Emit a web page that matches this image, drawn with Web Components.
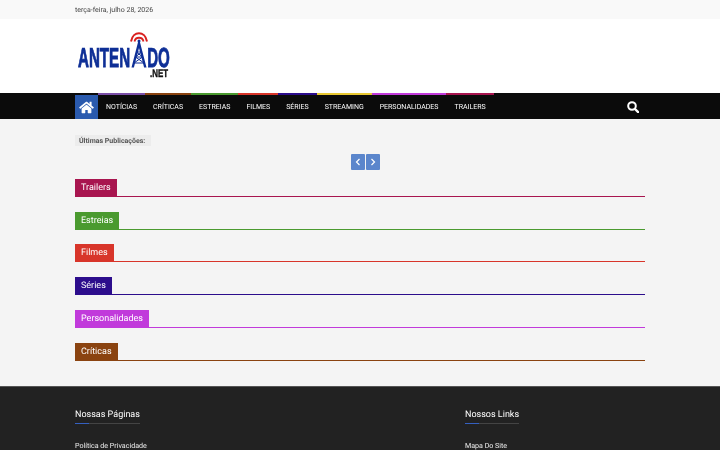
<!DOCTYPE html>
<html lang="pt">
<head>
<meta charset="utf-8">
<title>Antenado</title>
<style>
  html, body { margin: 0; padding: 0; }
  html { background: #f4f4f4; }
  body { font-family: Roboto, "Liberation Sans", sans-serif; text-rendering: geometricPrecision; filter: blur(.3px); }
</style>
</head>
<body>
<site-topbar>terça-feira, julho 28, 2026</site-topbar>
<site-header></site-header>
<main-nav>
  <nav-item color="#7b4fa8">NOTÍCIAS</nav-item>
  <nav-item color="#8a4310">CRÍTICAS</nav-item>
  <nav-item color="#4a9a2f">ESTREIAS</nav-item>
  <nav-item color="#d8352a">FILMES</nav-item>
  <nav-item color="#2c0d8c">SÉRIES</nav-item>
  <nav-item color="#e8c832">STREAMING</nav-item>
  <nav-item color="#c13adb">PERSONALIDADES</nav-item>
  <nav-item color="#a8154f">TRAILERS</nav-item>
</main-nav>
<site-main>
  <latest-ticker>Últimas Publicações:</latest-ticker>
  <section-title color="#a8154f">Trailers</section-title>
  <section-title color="#4a9a2f">Estreias</section-title>
  <section-title color="#d8352a">Filmes</section-title>
  <section-title color="#2c0d8c">Séries</section-title>
  <section-title color="#c13adb">Personalidades</section-title>
  <section-title color="#8a4310">Críticas</section-title>
</site-main>
<site-footer>
  <footer-col heading="Nossas Páginas"><a>Política de Privacidade</a></footer-col>
  <footer-col heading="Nossos Links"><a>Mapa Do Site</a></footer-col>
</site-footer>

<script>
class SiteTopbar extends HTMLElement {
  constructor() {
    super();
    this.attachShadow({ mode: 'open' });
    this.shadowRoot.innerHTML = `
      <style>
        :host { display: block; background: #f9f9f9; height: 19px; padding: 0 75px; font-size: 7px; line-height: 21px; color: #444; }
      </style>
      <slot></slot>`;
  }
}

class SiteHeader extends HTMLElement {
  constructor() {
    super();
    this.attachShadow({ mode: 'open' });
    this.shadowRoot.innerHTML = `
      <style>
        :host { display: flex; align-items: flex-start; background: #fff; height: 74px; padding: 0 75px; }
        .logo { position: relative; width: 92px; height: 47px; margin: 13px 0 0 3px; font-family: "Liberation Sans", sans-serif; font-weight: 700; color: #0e2f96; }
        .word { position: absolute; left: 0; top: 14px; transform: scaleX(.55); transform-origin: 0 0; font-size: 27.5px; line-height: 24px; white-space: nowrap; -webkit-text-stroke: .9px #0e2f96; display: flex; }
        .gap { display: block; width: 31px; }
        .net { position: absolute; left: 72px; top: 38px; transform: scaleX(.72); transform-origin: 0 0; font-size: 11px; line-height: 8px; color: #111; -webkit-text-stroke: .4px #111; }
        svg { position: absolute; left: 52px; top: 0; }
      </style>
      <div class="logo">
        <div class="word"><span>ANTEN</span><span class="gap"></span><span>DO</span></div>
        <span class="net">.NET</span>
        <svg width="18" height="36" viewBox="0 0 18 36" fill="none">
          <path d="M1 9.500C3 -1.500 15 -1.500 17 9.500" stroke="#d9201f" stroke-width="2"/>
          <path d="M4.500 9.500C5.500 4.500 12.500 4.500 13.500 9.500" stroke="#d9201f" stroke-width="1.800"/>
          <circle cx="9" cy="9" r="1.500" fill="#0e2f96"/>
          <path d="M8.200 9.500h1.600L16.500 35.500h-2.400L9 16 3.900 35.500H1.500z" fill="#0e2f96"/>
          <path d="M6.500 20h5M5.500 25h7M4 31h10M6.500 20l6 5M11.500 20l-6 5M5.500 25l8.500 6M12.500 25l-8.500 6" stroke="#0e2f96" stroke-width="1"/>
        </svg>
      </div>`;
  }
}

class MainNav extends HTMLElement {
  constructor() {
    super();
    this.attachShadow({ mode: 'open' });
    this.shadowRoot.innerHTML = `
      <style>
        :host { display: flex; align-items: stretch; background: #0b0b0b; height: 26px; padding: 0 75px; }
        .home { display: flex; align-items: center; justify-content: center; width: 23px; background: #2a5aae; margin-top: 2px; }
        .items { display: flex; flex: 1; }
        .search { display: flex; align-items: center; padding: 2px 6px 0 0; }
      </style>
      <a class="home">
        <svg width="15" height="13" viewBox="0 0 576 512" fill="#fff"><path d="M280 148 96 300v164c0 9 7 16 16 16l112-.3c9 0 16-7 16-16V368c0-9 7-16 16-16h64c9 0 16 7 16 16v96c0 9 7 16 16 16l112 .3c9 0 16-7 16-16V300L296 148c-5-4-11-4-16 0zM572 251l-84-69V44c0-7-5-12-12-12h-56c-7 0-12 5-12 12v72l-89-74c-18-14-43-14-61 0L4 251c-5 4-6 12-2 17l26 31c4 5 12 6 17 2L280 107c5-4 11-4 16 0l235 194c5 4 13 3 17-2l26-31c4-5 3-13-2-17z"/></svg>
      </a>
      <div class="items"><slot></slot></div>
      <div class="search">
        <svg width="12" height="12" viewBox="0 0 12 12" fill="none" stroke="#fff"><circle cx="5" cy="5" r="3.800" stroke-width="2"/><path d="M8 8l3.200 3.200" stroke-width="2.400" stroke-linecap="round"/></svg>
      </div>`;
  }
}

class NavItem extends HTMLElement {
  constructor() {
    super();
    this.attachShadow({ mode: 'open' });
    this.shadowRoot.innerHTML = `
      <style>
        :host { display: block; box-sizing: border-box; height: 26px; padding: 0 8px; border-top: 2px solid var(--c); font-size: 7px; line-height: 25px; color: #fff; white-space: nowrap; }
      </style>
      <slot></slot>`;
  }
  connectedCallback() {
    this.style.setProperty('--c', this.getAttribute('color'));
  }
}

class SiteMain extends HTMLElement {
  constructor() {
    super();
    this.attachShadow({ mode: 'open' });
    this.shadowRoot.innerHTML = `
      <style>
        :host { display: flex; flex-direction: column; gap: 13.8px; height: 267px; box-sizing: border-box; padding: 16px 75px 0; background: #f4f4f4; }
      </style>
      <slot></slot>`;
  }
}

class LatestTicker extends HTMLElement {
  constructor() {
    super();
    this.attachShadow({ mode: 'open' });
    this.shadowRoot.innerHTML = `
      <style>
        :host { display: block; height: 30px; }
        .label { display: block; width: max-content; height: 11px; background: #ececec; padding: 0 6px 0 4px; font-size: 7px; line-height: 12px; font-weight: 700; color: #555; }
        .pager { display: flex; justify-content: center; gap: 1px; margin: 8px 0 0 10px; }
        button { display: flex; align-items: center; justify-content: center; width: 14px; height: 16px; padding: 0; border: 0; border-radius: 1px; background: #5b86cc; }
      </style>
      <span class="label"><slot></slot></span>
      <div class="pager">
        <button><svg width="6" height="8" viewBox="0 0 6 8" fill="none" stroke="#fff" stroke-width="1.200"><path d="M4.500 1 1.500 4l3 3"/></svg></button>
        <button><svg width="6" height="8" viewBox="0 0 6 8" fill="none" stroke="#fff" stroke-width="1.200"><path d="M1.500 1l3 3-3 3"/></svg></button>
      </div>`;
  }
}

class SectionTitle extends HTMLElement {
  constructor() {
    super();
    this.attachShadow({ mode: 'open' });
    this.shadowRoot.innerHTML = `
      <style>
        :host { display: block; }
        .tab { display: block; width: max-content; height: 17px; padding: 0 6px; background: var(--c); color: #fff; font-size: 9px; line-height: 19px; }
        .rule { height: 2px; background: linear-gradient(var(--c) 50%, transparent 50%); }
      </style>
      <span class="tab"><slot></slot></span>
      <div class="rule"></div>`;
  }
  connectedCallback() {
    this.style.setProperty('--c', this.getAttribute('color'));
  }
}

class SiteFooter extends HTMLElement {
  constructor() {
    super();
    this.attachShadow({ mode: 'open' });
    this.shadowRoot.innerHTML = `
      <style>
        :host { display: grid; grid-template-columns: 390px 1fr; height: 64px; box-sizing: border-box; padding: 21px 75px 0; background: #222; border-top: 1px solid #555; overflow: hidden; }
      </style>
      <slot></slot>`;
  }
}

class FooterCol extends HTMLElement {
  constructor() {
    super();
    this.attachShadow({ mode: 'open' });
    this.shadowRoot.innerHTML = `
      <style>
        :host { display: block; color: #eee; }
        h3 { display: block; width: max-content; position: relative; margin: 0; font-size: 9px; line-height: 15px; font-weight: 400; color: #fff; border-bottom: 1px solid #444; }
        h3::after { content: ""; position: absolute; left: 0; bottom: -1px; width: 14px; height: 1px; background: #3560c0; }
        .body { margin-top: 19px; font-size: 7.1px; line-height: 6px; }
      </style>
      <h3></h3>
      <div class="body"><slot></slot></div>`;
  }
  connectedCallback() {
    this.shadowRoot.querySelector('h3').textContent = this.getAttribute('heading');
  }
}

customElements.define('site-topbar', SiteTopbar);
customElements.define('site-header', SiteHeader);
customElements.define('main-nav', MainNav);
customElements.define('nav-item', NavItem);
customElements.define('site-main', SiteMain);
customElements.define('latest-ticker', LatestTicker);
customElements.define('section-title', SectionTitle);
customElements.define('site-footer', SiteFooter);
customElements.define('footer-col', FooterCol);
</script>
</body>
</html>
